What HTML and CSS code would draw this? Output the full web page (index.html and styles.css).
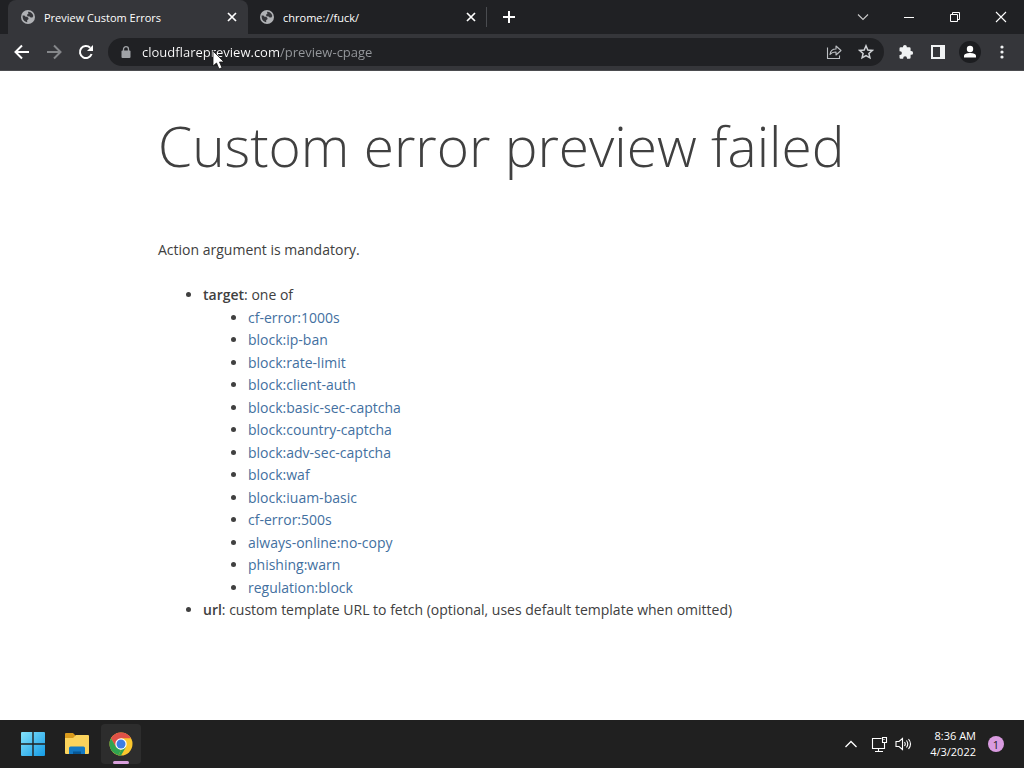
FILE: index.html
```html
<!DOCTYPE html>
<html lang="en">
<head>
<meta charset="utf-8">
<meta name="viewport" content="width=device-width, initial-scale=1">
<title>Preview Custom Errors</title>
<link rel="stylesheet" href="styles.css">
</head>
<body>
<svg class="defs" aria-hidden="true">
  <symbol id="globe" viewBox="0 0 14 14">
    <circle cx="7" cy="7" r="7" fill="currentColor"/>
    <path class="globe-land" d="M1.6 5.6 L3.4 5.6 L4.6 6.8 L6.2 6.8 L7.6 8.2 L7.2 9.6 L6.2 10 L6.2 12.3 C3.5 12 1.4 9.800 1.6 5.600Z M7 1.700 C9.600 1.500 11.900 3.300 12.300 6 L11.400 7.600 L9.600 7.600 L8.600 6.400 L6.400 6.200 L6 4.600 L7.400 3.900Z"/>
  </symbol>
  <symbol id="cross" viewBox="0 0 10 10">
    <path d="M1 1 L9 9 M9 1 L1 9" fill="none" stroke="currentColor" stroke-width="1.7"/>
  </symbol>
</svg>

<header class="browser">
  <div class="tabstrip">
    <div class="tab tab-active">
      <svg class="favicon"><use href="#globe"/></svg>
      <span class="tab-title">Preview Custom Errors</span>
      <button class="tab-close" aria-label="Close tab"><svg class="icon-10"><use href="#cross"/></svg></button>
    </div>
    <div class="tab">
      <svg class="favicon"><use href="#globe"/></svg>
      <span class="tab-title">chrome://fuck/</span>
      <button class="tab-close" aria-label="Close tab"><svg class="icon-10"><use href="#cross"/></svg></button>
    </div>
    <button class="new-tab" aria-label="New tab">
      <svg width="12" height="12" viewBox="0 0 12 12"><path d="M6 0V12M0 6H12" stroke="#fff" stroke-width="2"/></svg>
    </button>
    <div class="window-controls">
      <button class="window-button" aria-label="Search tabs"><svg width="12" height="12" viewBox="0 0 12 12"><path d="M1 3.5 L6 8.5 L11 3.5" fill="none" stroke="#ccc" stroke-width="1.1"/></svg></button>
      <button class="window-button" aria-label="Minimize"><svg width="12" height="12" viewBox="0 0 12 12"><path d="M1 6.5H11" stroke="#fff"/></svg></button>
      <button class="window-button" aria-label="Restore"><svg width="12" height="12" viewBox="0 0 12 12"><path d="M1.5 3.5H8.5V10.5H1.5Z M3.5 3.5V1.5H10.5V8.5H8.5" fill="none" stroke="#fff"/></svg></button>
      <button class="window-button" aria-label="Close"><svg width="12" height="12" viewBox="0 0 12 12"><path d="M1 1L11 11M11 1L1 11" stroke="#fff" stroke-width="1.1"/></svg></button>
    </div>
  </div>

  <div class="toolbar">
    <button class="tool" aria-label="Back"><svg width="16" height="16" viewBox="0 0 16 16"><path d="M15 8H2M8 1.5L1.5 8L8 14.5" fill="none" stroke="#fff" stroke-width="2"/></svg></button>
    <button class="tool" aria-label="Forward" disabled><svg width="16" height="16" viewBox="0 0 16 16"><path d="M1 8H14M8 1.5L14.5 8L8 14.5" fill="none" stroke="#85878a" stroke-width="2"/></svg></button>
    <button class="tool" aria-label="Reload"><svg width="16" height="16" viewBox="0 0 16 16"><path d="M13.6 10A6 6 0 1 1 12.2 3.8" fill="none" stroke="#fff" stroke-width="2"/><path d="M15 1V7H9Z" fill="#fff"/></svg></button>
    <div class="omnibox">
      <svg class="lock" width="10" height="13" viewBox="0 0 10 13"><path d="M2.5 5V3.2a2.5 2.5 0 0 1 5 0V5" fill="none" stroke="#a0a3a7" stroke-width="1.3"/><rect x="0.5" y="4.5" width="9" height="7.5" rx="1" fill="#a0a3a7"/></svg>
      <input class="address" type="text" aria-label="Address" value="cloudflarepreview.com/preview-cpage">
      <button class="tool" aria-label="Share"><svg width="16" height="16" viewBox="0 0 16 16"><path d="M1.5 3.5V14.5H13.5V11.5 M4 10.5C4.4 7 6.5 5 10 5V2L15 6.5L10 11V8C7.5 8 5.5 8.6 4 10.5Z" fill="none" stroke="#bdc0c4" stroke-width="1.1" stroke-linejoin="round"/></svg></button>
      <button class="tool" aria-label="Bookmark"><svg width="16" height="16" viewBox="0 0 16 16"><path d="M8 1.8L9.8 6L14.3 6.4L10.9 9.4L11.9 13.8L8 11.5L4.1 13.8L5.1 9.4L1.7 6.4L6.2 6Z" fill="none" stroke="#d0d3d6" stroke-width="1.5"/></svg></button>
    </div>
    <button class="tool" aria-label="Extensions"><svg width="16" height="16" viewBox="0 0 16 16"><path d="M1.5 4.5Q1.5 3.3 2.7 3.3H5V2.8a1.9 1.9 0 0 1 3.8 0V3.3H11.4Q12.6 3.3 12.6 4.5V7H13.2a1.9 1.9 0 0 1 0 3.8H12.6V13.5Q12.6 14.7 11.4 14.7H9V14.2a1.9 1.9 0 0 0-3.8 0V14.7H2.7Q1.5 14.7 1.5 13.5V11H2a1.9 1.9 0 0 0 0-3.8H1.5Z" fill="#f1f3f4"/></svg></button>
    <button class="tool" aria-label="Side panel"><svg width="14" height="14" viewBox="0 0 14 14"><path d="M0 0H14V14H0Z M2 2V12H9V2Z" fill="#f1f3f4" fill-rule="evenodd"/></svg></button>
    <button class="tool" aria-label="Profile"><svg width="22" height="22" viewBox="0 0 22 22"><circle cx="11" cy="11" r="11" fill="#1c1d20"/><circle cx="11" cy="8" r="3.2" fill="#fff"/><path d="M5 16.5V15C5 12.8 8.5 12 11 12S17 12.8 17 15V16.5Z" fill="#fff"/></svg></button>
    <button class="tool" aria-label="Menu"><svg width="4" height="14" viewBox="0 0 4 14"><g fill="#f1f3f4"><circle cx="2" cy="2" r="1.6"/><circle cx="2" cy="7" r="1.6"/><circle cx="2" cy="12" r="1.6"/></g></svg></button>
  </div>
</header>

<main class="page">
  <div class="wrapper">
    <h1 class="headline">Custom error preview failed</h1>
    <p class="message">Action argument is mandatory.</p>
    <ul class="list">
      <li><strong>target</strong>: one of
        <ul class="list">
          <li><a href="#">cf-error:1000s</a></li>
          <li><a href="#">block:ip-ban</a></li>
          <li><a href="#">block:rate-limit</a></li>
          <li><a href="#">block:client-auth</a></li>
          <li><a href="#">block:basic-sec-captcha</a></li>
          <li><a href="#">block:country-captcha</a></li>
          <li><a href="#">block:adv-sec-captcha</a></li>
          <li><a href="#">block:waf</a></li>
          <li><a href="#">block:iuam-basic</a></li>
          <li><a href="#">cf-error:500s</a></li>
          <li><a href="#">always-online:no-copy</a></li>
          <li><a href="#">phishing:warn</a></li>
          <li><a href="#">regulation:block</a></li>
        </ul>
      </li>
      <li><strong>url</strong>: custom template URL to fetch (optional, uses default template when omitted)</li>
    </ul>
  </div>
</main>

<footer class="taskbar">
  <div class="apps">
    <button class="app" aria-label="Start"><svg width="24" height="24" viewBox="0 0 24 24"><defs><linearGradient id="win" x2="1" y2="1"><stop stop-color="#83e2fb"/><stop offset="1" stop-color="#149be6"/></linearGradient></defs><path d="M0 1Q0 0 1 0H11.3V11.3H0Z M12.7 0H23Q24 0 24 1V11.3H12.7Z M0 12.7H11.3V24H1Q0 24 0 23Z M12.7 12.7H24V23Q24 24 23 24H12.7Z" fill="url(#win)"/></svg></button>
    <button class="app" aria-label="File Explorer"><svg width="26" height="24" viewBox="0 0 26 24"><path d="M1 2Q1 1 2 1H9L12 4V9H1Z" fill="#d99a1c"/><path d="M1 6H9L12 3H24Q25 3 25 4V21Q25 22 24 22H2Q1 22 1 21Z" fill="#fbd35c"/><path d="M5 22V16Q5 14.5 6.5 14.5H19.5Q21 14.5 21 16V22Z" fill="#1379c4"/><path d="M9 22V19.5H17V22Z" fill="#075795"/></svg></button>
    <button class="app app-active" aria-label="Google Chrome"><svg width="24" height="24" viewBox="0 0 24 24"><circle cx="12" cy="12" r="11.5" fill="#fbc72d"/><path d="M12 12L6.8 15L2 6.3A11.5 11.5 0 0 1 22 6.300H12Z" fill="#df5147"/><path d="M2 6.3L7 15L12 18L9.5 23.2A11.5 11.5 0 0 1 2 6.3Z" fill="#30a350"/><path d="M7 15Q9 18 12 17.5L17 15L12 23.5H9.5L12 18Z" fill="#30a350"/><circle cx="12" cy="12" r="5.7" fill="#fff"/><circle cx="12" cy="12" r="4.5" fill="#3e7de2"/></svg></button>
  </div>
  <div class="tray">
    <button class="tray-button" aria-label="Show hidden icons"><svg width="12" height="12" viewBox="0 0 12 12"><path d="M0.5 9L6 3.5L11.5 9" fill="none" stroke="#fff" stroke-width="1.3"/></svg></button>
    <button class="tray-button tray-status" aria-label="Network and volume">
      <svg width="17" height="17" viewBox="0 0 17 17"><path d="M10.5 2.5H1.5V12.5H13.5V8 M7.5 12.5V15.5 M4 15.5H12 M11.5 1.5H15.5V6.5H11.5Z M13.5 6.5V9 M13 3V4" fill="none" stroke="#fff" stroke-width="1.1"/></svg>
      <svg width="17" height="16" viewBox="0 0 17 16"><path d="M1 5.5H4L7.5 2.5V13.5L4 10.5H1Z M9.5 6Q11 8 9.5 10 M11.5 4.5Q14 8 11.5 11.5 M13.5 3Q17.5 8 13.5 13" fill="none" stroke="#fff" stroke-width="1.1"/></svg>
    </button>
    <time class="clock" datetime="2022-04-03T08:36"><span>8:36 AM</span><span>4/3/2022</span></time>
    <button class="badge" aria-label="1 notification">1</button>
  </div>
</footer>

<svg class="cursor" width="14" height="20" viewBox="0 0 14 20" aria-hidden="true"><path d="M1 1V16L4.500 13L7 19L10 17.700L7.500 12H12Z" fill="#fff" stroke="#111" stroke-width="0.8"/></svg>
</body>
</html>
```

FILE: styles.css
```css
* {
  box-sizing: border-box;
}

body {
  display: flex;
  flex-direction: column;
  min-height: 100vh;
  margin: 0;
  background: #fff;
  color: #404040;
  font-family: "Open Sans", "Noto Sans", sans-serif;
  font-size: 14px;
}

button {
  display: flex;
  align-items: center;
  justify-content: center;
  flex: none;
  padding: 0;
  border: 0;
  background: none;
  color: inherit;
  font: inherit;
}

svg {
  display: block;
  flex: none;
}

.defs {
  position: absolute;
  width: 0;
  height: 0;
}

.browser {
  background: #35363a;
  color: #fff;
  border-bottom: 1px solid #4b4c4f;
}

.tabstrip {
  display: flex;
  align-items: center;
  height: 34px;
  padding-left: 8px;
  background: #202124;
}

.tab {
  display: flex;
  align-items: center;
  flex: 0 1 239px;
  gap: 9px;
  height: 20px;
  padding: 0 9px 0 12px;
  border-right: 1px solid #4a4c50;
}

.tab-active {
  flex-basis: 240px;
  height: 34px;
  padding: 0 10px 0 13px;
  border-right: 0;
  border-radius: 8px 8px 0 0;
  background: #35363a;
}

.tab-title {
  flex: 1;
  overflow: hidden;
  font-size: 11px;
  white-space: nowrap;
}

.favicon {
  width: 14px;
  height: 14px;
  color: #b0b2b5;
}

.globe-land {
  fill: #35363a;
}

.tab-close {
  width: 12px;
  height: 16px;
}

.icon-10 {
  width: 10px;
  height: 10px;
}

.new-tab {
  width: 28px;
  height: 28px;
  margin-left: 8px;
}

.window-controls {
  display: flex;
  margin-left: auto;
}

.window-button {
  width: 46px;
  height: 28px;
}

.toolbar {
  display: flex;
  align-items: center;
  height: 36px;
  padding: 0 6px;
}

.tool {
  width: 32px;
  height: 28px;
}

.omnibox {
  display: flex;
  align-items: center;
  flex: 1;
  height: 28px;
  margin: 0 6px;
  padding: 0 2px 0 13px;
  border-radius: 14px;
  background: #202124;
}

.address {
  flex: 1;
  min-width: 0;
  height: 24px;
  margin-left: 11px;
  padding: 0;
  border: 0;
  outline: 0;
  background: linear-gradient(to right, #fff 138px, #96999d 138px);
  background-clip: text;
  color: transparent;
  caret-color: #fff;
  font-family: inherit;
  font-size: 13px;
}

.page {
  flex: 1;
  padding: 36px 16px;
}

.wrapper {
  max-width: 708px;
  margin: 0 auto;
}

.headline {
  margin: 0;
  font-size: 55px;
  font-weight: 300;
  line-height: 78px;
}

.message {
  margin: 53px 0 23px;
  line-height: 23px;
}

.list {
  margin: 0;
  padding-left: 45px;
  line-height: 1.61;
  list-style-type: disc;
}

.list strong {
  font-weight: 600;
}

.list a {
  color: #43709f;
  text-decoration: none;
}

.list a:hover {
  text-decoration: underline;
}

.taskbar {
  display: flex;
  align-items: center;
  justify-content: space-between;
  height: 48px;
  padding: 0 20px 0 13px;
  background: #202020;
  color: #fff;
}

.apps {
  display: flex;
  gap: 4px;
}

.app {
  position: relative;
  width: 40px;
  height: 40px;
  border-radius: 4px;
}

.app-active {
  background: #2d2d2d;
}

.app-active::after {
  content: "";
  position: absolute;
  bottom: 0;
  left: 12px;
  width: 16px;
  height: 3px;
  border-radius: 2px;
  background: #d9a0dc;
}

.tray {
  display: flex;
  align-items: center;
}

.tray-button {
  width: 28px;
  height: 40px;
}

.tray-status {
  gap: 7px;
  width: 52px;
}

.clock {
  display: flex;
  flex-direction: column;
  margin: 0 12px 0 13px;
  font-size: 11px;
  line-height: 16px;
  text-align: right;
}

.badge {
  width: 16px;
  height: 16px;
  border-radius: 50%;
  background: #d99be0;
  color: #202020;
  font-size: 11px;
}

.cursor {
  position: absolute;
  top: 50px;
  left: 212px;
  pointer-events: none;
}
```
